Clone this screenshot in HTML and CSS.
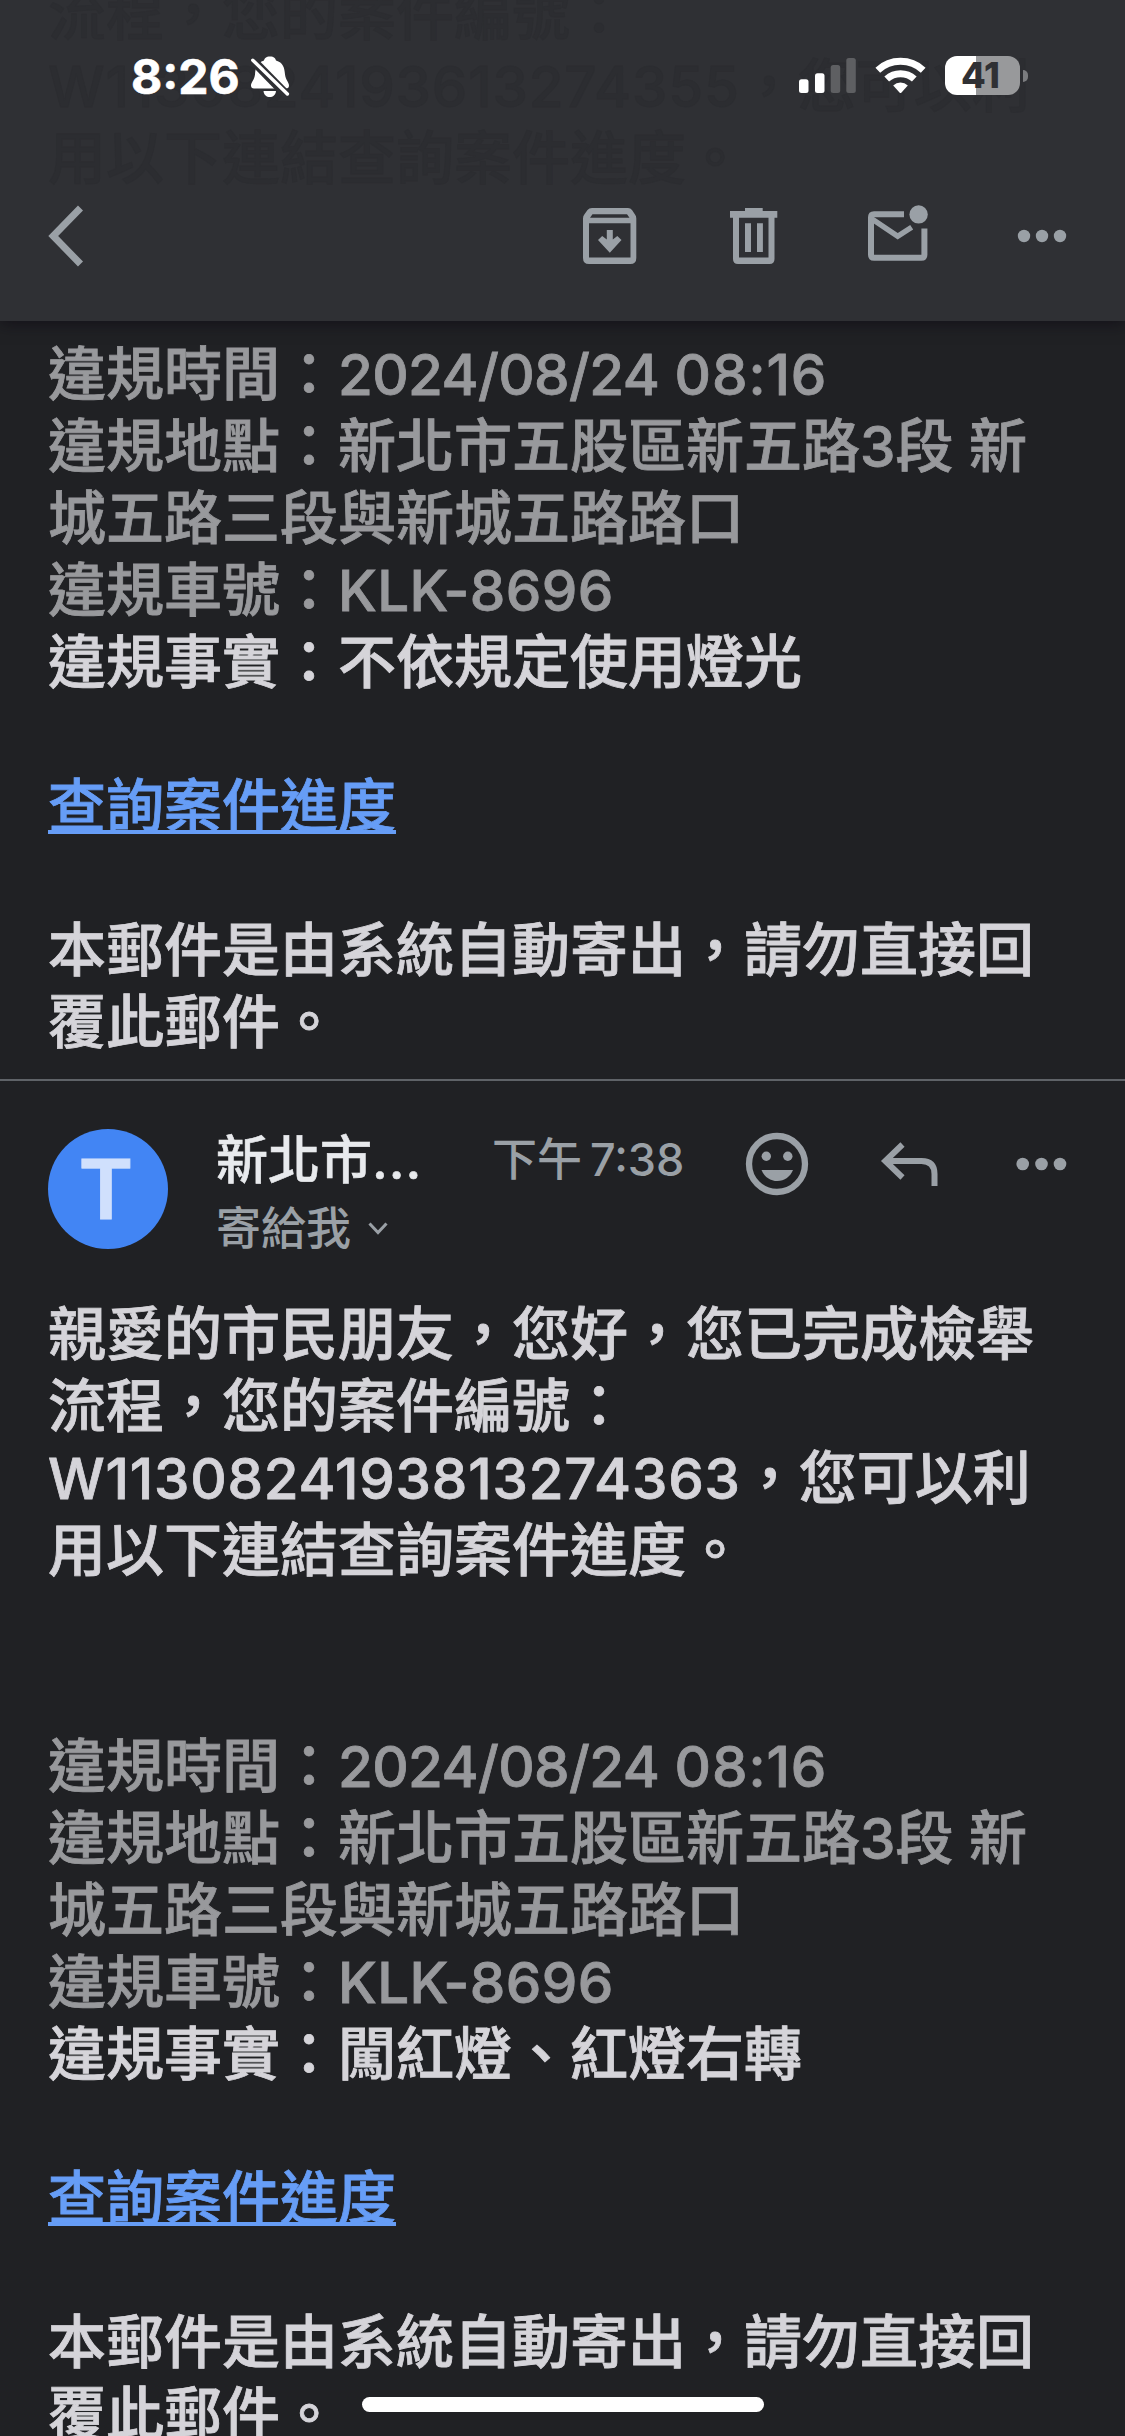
FILE: index.html
```html
<!DOCTYPE html>
<html lang="zh-Hant">
<head>
<meta charset="utf-8">
<title>Mail</title>
<link rel="stylesheet" href="styles.css">
</head>
<body>
<div class="screen">
  <header class="appbar">
    <p class="under body-text">流程，您的案件編號：<br><span class="latin id">W1130824193613274355</span>，您可以利<br>用以下連結查詢案件進度。</p>
    <div class="status">
      <span class="clock">8:26</span>
      <svg class="bell" viewBox="250 52 40 48" width="40" height="48">
        <path fill="#fff" d="M270 56.500c4 0 5.500 2 6 4 7 2 8.500 7 9 14 .5 5 4 8 4 11 0 2-1 3-3 3h-32c-2 0-3-1-3-3 0-3 3.500-6 4-11 .500-7 2-12 9-14 .500-2 2-4 6-4z"/>
        <path fill="#fff" d="M263.500 91h12.500c-.500 4-3 6-6.250 6s-5.750-2-6.250-6z"/>
        <path stroke="#2f3034" stroke-width="9" d="M250 57.500L289 97.500"/>
        <path stroke="#fff" stroke-width="3.400" stroke-linecap="round" d="M252.800 60.200L287.400 94"/>
      </svg>
      <svg class="signal" viewBox="799 52 58 48" width="58" height="48" fill="#fff">
        <rect x="799" y="79.300" width="9.500" height="13.700" rx="2.500"/>
        <rect x="815" y="73.300" width="9.500" height="19.700" rx="2.500"/>
        <g fill="#5e5f62"><rect x="830.700" y="65" width="9.500" height="28" rx="2.500"/>
        <rect x="846.300" y="58" width="9.500" height="35" rx="2.500"/></g>
      </svg>
      <svg class="wifi" viewBox="875 52 51 48" width="51" height="48" fill="none" stroke="#fff">
        <path stroke-width="7" d="M877.800 70.200a33.500 33.500 0 0 1 45.400 0"/>
        <path stroke-width="7" d="M886.700 79a20.500 20.500 0 0 1 27.600 0"/>
        <path fill="#fff" stroke="none" d="M893.200 85.500a10.500 10.500 0 0 1 14.600 0l-6.300 7a1.400 1.400 0 0 1-2 0z"/>
      </svg>
      <span class="battery"><span class="level">41</span></span><span class="nub"></span>
    </div>
    <div class="toolbar">
      <svg viewBox="48 204 36 64" width="36" height="64" fill="none" stroke="#9aa0a6" stroke-width="7"><path d="M80.500 208L53.200 236l27.300 28"/></svg>
      <div class="actions">
        <svg viewBox="582 204 60 64" width="60" height="64" fill="#9aa0a6">
          <path fill-rule="evenodd" d="M592 208h36q2.500 0 4 2l3 4.500q1.300 1.700 1.300 4V258q0 6-6 6h-41.300q-6 0-6-6V218.500q0-2.300 1.300-4l3.200-4.500q1.500-2 4.500-2zM592.500 214.200l-2.500 3.500h39.500l-2.500-3.500zM589 223.300v34.200h41.500v-34.200z"/>
          <path d="M606.800 230h6v9.500l4.500-3.500 4.200 4-11.700 12.800L598 240l4.200-4 4.600 3.500z"/>
        </svg>
        <svg viewBox="726 204 56 64" width="56" height="64" fill="#9aa0a6">
          <path fill-rule="evenodd" d="M745 208h17.700v3h14.600v6.700h-2.800V259q0 5-5 5h-31.500q-5 0-5-5v-41.300h-3V211h15zM739 217.700v39.700h29.500v-39.700zM745 223.300h6v28.700h-6zM757 223.300h5.900v28.700H757z"/>
        </svg>
        <svg viewBox="866 204 64 64" width="64" height="64" fill="none" stroke="#9aa0a6" stroke-width="6">
          <path d="M904 214.300H874q-3 0-3 3V254.700q0 3 3 3h47.400q3 0 3-3V228.500"/>
          <path stroke-width="5.500" d="M872 219l25.700 17.200 14-9"/>
          <circle cx="918.600" cy="214.400" r="9.200" fill="#9aa0a6" stroke="none"/>
        </svg>
        <svg viewBox="1014 204 56 64" width="56" height="64" fill="#9aa0a6"><circle cx="1024" cy="236" r="6.200"/><circle cx="1042" cy="236" r="6.200"/><circle cx="1060" cy="236" r="6.200"/></svg>
      </div>
    </div>
  </header>

  <main class="thread">
    <article class="message first">
      <div class="body-text">
        <p class="muted">違規時間：<span class="latin date">2024/08/24</span> <span class="latin clocktime">08:16</span><br>違規地點：新北市五股區新五路<span class="latin">3</span>段 新<br>城五路三段與新城五路路口<br>違規車號：<span class="latin plate">KLK-8696</span></p>
        <p>違規事實：不依規定使用燈光</p>
        <p class="gap"><a class="link" href="#">查詢案件進度</a></p>
        <p>本郵件是由系統自動寄出，請勿直接回<br>覆此郵件。</p>
      </div>
    </article>

    <article class="message second">
      <div class="sender">
        <span class="avatar">T</span>
        <div class="who">
          <span class="name">新北市<span class="dots">...</span></span>
          <span class="to">寄給我 <svg viewBox="0 0 20 14" width="20" height="14" fill="none" stroke="#9aa0a6" stroke-width="3"><path d="M1.500 1.500L10 10.500l8.500-9"/></svg></span>
        </div>
        <span class="time">下午<span class="hour">7:38</span></span>
        <svg class="mood" viewBox="745 1132 64 64" width="64" height="64" fill="#9aa0a6">
          <circle cx="777" cy="1164" r="28" fill="none" stroke="#9aa0a6" stroke-width="6.300"/>
          <circle cx="766.300" cy="1156.300" r="4.700"/><circle cx="787.800" cy="1156.300" r="4.700"/>
          <path d="M761.500 1170h31.500c-2.500 6.500-8.500 11-15.700 11s-13.300-4.500-15.800-11z"/>
        </svg>
        <svg class="reply" viewBox="880 1132 60 64" width="60" height="64" fill="none" stroke="#9aa0a6" stroke-width="6">
          <path d="M902.500 1144.500L885.300 1161l17.200 16.500M886 1161h35.500q13 0 13 13V1186"/>
        </svg>
        <svg class="more" viewBox="1014 1132 56 64" width="56" height="64" fill="#9aa0a6"><circle cx="1022.700" cy="1164" r="6.300"/><circle cx="1041.500" cy="1164" r="6.300"/><circle cx="1060" cy="1164" r="6.300"/></svg>
      </div>
      <div class="body-text">
        <p>親愛的市民朋友，您好，您已完成檢舉<br>流程，您的案件編號：<br><span class="latin id">W1130824193813274363</span>，您可以利<br>用以下連結查詢案件進度。</p>
        <p class="muted details">違規時間：<span class="latin date">2024/08/24</span> <span class="latin clocktime">08:16</span><br>違規地點：新北市五股區新五路<span class="latin">3</span>段 新<br>城五路三段與新城五路路口<br>違規車號：<span class="latin plate">KLK-8696</span></p>
        <p>違規事實：闖紅燈、紅燈右轉</p>
        <p class="gap"><a class="link" href="#">查詢案件進度</a></p>
        <p>本郵件是由系統自動寄出，請勿直接回<br>覆此郵件。</p>
      </div>
    </article>
  </main>
  <div class="home"></div>
</div>
</body>
</html>
```
FILE: styles.css
```css
* { box-sizing: border-box; }
body {
  margin: 0;
  background: #202124;
  font-family: Inter, "Noto Sans CJK TC", sans-serif;
}
p { margin: 0; }
svg { display: block; flex: none; }
.screen {
  position: relative;
  width: 1125px;
  height: 2436px;
  overflow: hidden;
  display: flex;
  flex-direction: column;
  background: #202124;
}

/* top bar */
.appbar {
  position: relative;
  z-index: 1;
  flex: none;
  height: 321px;
  padding-top: 52px;
  background: #2f3034;
  box-shadow: 0 3px 14px rgba(12, 8, 18, .6);
}
.under {
  position: absolute;
  top: -22px;
  left: 48px;
}
.appbar .under { color: #2c2d31; }
.status {
  position: relative;
  display: flex;
  height: 48px;
  padding-left: 131px;
}
.clock {
  width: 119px;
  font-size: 48px;
  font-weight: 700;
  line-height: 49px;
  color: #fff;
  -webkit-text-stroke: .6px #fff;
}
.signal { margin-left: 509px; }
.wifi { margin-left: 18px; }
.battery {
  width: 75px;
  height: 39px;
  margin: 4px 0 0 19px;
  border-radius: 12px;
  background: linear-gradient(90deg, #fff 31px, #98999b 31px);
  text-align: center;
}
.level {
  font-size: 36px;
  font-weight: 800;
  line-height: 39px;
  color: #2f3034;
  margin-left: -4px;
}
.nub {
  width: 5px;
  height: 12px;
  margin: 18px 0 0 3px;
  border-radius: 0 6px 6px 0;
  background: #7b7c7f;
}
.toolbar {
  position: relative;
  display: flex;
  justify-content: space-between;
  margin-top: 104px;
  padding: 0 55px 0 48px;
}
.actions { display: flex; gap: 84px; }

/* messages */
.thread { flex: none; }
.body-text {
  font-size: 58px;
  font-weight: 500;
  line-height: 72px;
  color: #d5d4d9;
  white-space: nowrap;
  -webkit-text-stroke: .8px currentColor;
}
.first .body-text, .second .body-text { padding-left: 48px; }
.latin { font-size: 56.500px; line-height: 1; }
.id { letter-spacing: .8px; }
.date { letter-spacing: -.6px; }
.clocktime { letter-spacing: .9px; }
.plate { letter-spacing: .4px; }
.muted { color: #98999c; }
.first {
  height: 760px;
  padding-top: 17px;
  border-bottom: 2px solid #5f6368;
}
.gap { padding: 72px 0; }
.details { padding-top: 144px; }
.link {
  color: #669df6;
  text-decoration: underline;
  text-decoration-thickness: 4px;
  text-underline-offset: 3px;
  text-decoration-skip-ink: none;
}
.sender {
  display: flex;
  height: 217px;
  padding: 48px 0 0 48px;
}
.avatar {
  flex: none;
  width: 120px;
  height: 120px;
  padding-right: 4px;
  border-radius: 50%;
  background: #4285f4;
  color: #d0e0fd;
  font-size: 83px;
  font-weight: 600;
  line-height: 120px;
  text-align: center;
  -webkit-text-stroke: .8px currentColor;
}
.who {
  display: flex;
  flex-direction: column;
  width: 324px;
  padding-left: 48px;
}
.name {
  font-size: 52px;
  font-weight: 500;
  line-height: 64px;
  color: #e8eaed;
  -webkit-text-stroke: .6px currentColor;
}
.dots { letter-spacing: 1px; }
.to {
  display: flex;
  align-items: center;
  gap: 17px;
  margin-top: 4px;
  font-size: 45px;
  font-weight: 500;
  line-height: 64px;
  color: #9aa0a6;
}
.time {
  width: 253px;
  font-size: 45px;
  font-weight: 500;
  line-height: 62px;
  color: #9aa0a6;
  white-space: nowrap;
}
.hour { margin-left: 8px; }
.mood, .reply, .more { margin-top: 3px; }
.reply { margin-left: 71px; }
.more { margin-left: 74px; }

.home {
  position: absolute;
  left: 362px;
  top: 2397px;
  width: 402px;
  height: 15px;
  border-radius: 8px;
  background: #fff;
}
```
